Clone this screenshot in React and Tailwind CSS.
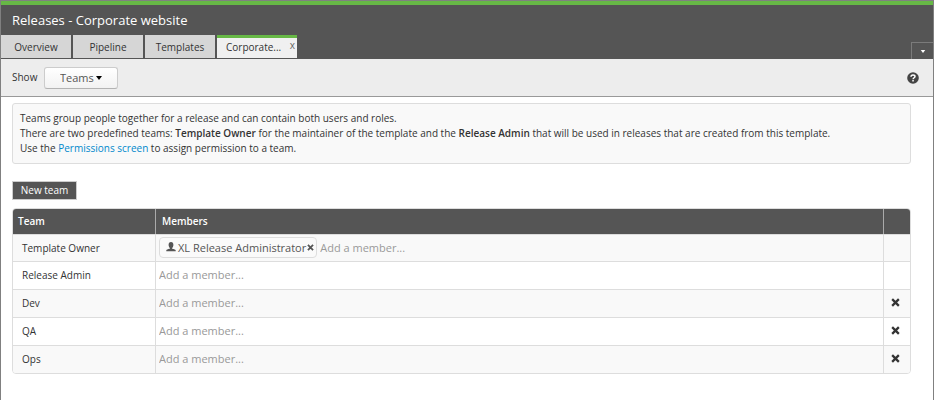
import React from "react";

const teams = [
  { name: "Template Owner", members: ["XL Release Administrator"], removable: false },
  { name: "Release Admin", members: [], removable: false },
  { name: "Dev", members: [], removable: true },
  { name: "QA", members: [], removable: true },
  { name: "Ops", members: [], removable: true },
];

function Cross({ className }) {
  return (
    <svg viewBox="0 0 10 10" className={className} aria-hidden="true">
      <path d="M1.3 1.3 8.7 8.7M8.7 1.3 1.3 8.7" stroke="currentColor" strokeWidth="2.5" fill="none" />
    </svg>
  );
}

function Caret({ className }) {
  return (
    <svg viewBox="0 0 6 4" className={className} aria-hidden="true">
      <path d="M0 0h6L3 4z" fill="currentColor" />
    </svg>
  );
}

function UserIcon() {
  return (
    <svg viewBox="0 0 10 10" className="size-[10px] shrink-0" fill="currentColor" aria-hidden="true">
      <path d="M5 0C3.400 0 2.600 1.200 2.600 2.700c0 1.300.5 2.600 1.300 3.200v.7C3.300 7.300.3 7.300.3 8.600V9.300h9.400v-.7c0-1.300-3-1.300-3.600-2v-.7c.8-.6 1.300-1.900 1.300-3.200C7.400 1.200 6.600 0 5 0z" />
    </svg>
  );
}

function HelpIcon() {
  return (
    <svg viewBox="0 0 12 12" className="size-3" aria-hidden="true">
      <circle cx="6" cy="6" r="5.8" fill="#444" />
      <path d="M4 4.700C4 3.400 4.900 2.900 6 2.900s2 .6 2 1.600c0 1.200-1.900 1.300-1.900 2.700" stroke="#fff" strokeWidth="1.500" fill="none" />
      <path d="M5.300 8h1.500v1.500H5.300z" fill="#fff" />
    </svg>
  );
}

function Tab({ children }) {
  return (
    <button className="h-[23px] w-[70px] bg-[#d6d6d6] pt-[2px] text-center text-[#333]">{children}</button>
  );
}

function Header() {
  return (
    <header className="border-t-4 border-[#67b846] bg-[#555]">
      <h1 className="flex h-[30px] items-center px-[11px] text-[13px] text-white">
        Releases - Corporate website
      </h1>
      <div className="flex h-6 items-end justify-between">
        <nav className="flex gap-[2px] self-start">
          <Tab>Overview</Tab>
          <Tab>Pipeline</Tab>
          <Tab>Templates</Tab>
          <div className="flex h-[23px] w-[80px] items-start justify-between border-t-[3px] border-[#67b846] bg-[#f0f0f0] pl-[9px] pr-[2px] text-[#333]">
            <button className="h-[18px]">Corporate...</button>
            <button className="text-[10px] leading-[14px] text-[#666]" aria-label="Close tab">x</button>
          </div>
        </nav>
        <button
          className="flex h-[17px] w-[22px] items-center justify-center border-l border-t border-[#7b7b7b] text-white"
          aria-label="More tabs"
        >
          <Caret className="h-[3px] w-[6px]" />
        </button>
      </div>
    </header>
  );
}

function Toolbar() {
  return (
    <div className="flex h-[38px] items-center border-b border-[#999] bg-[#ededed] pl-[11px] pr-[14px]">
      <label htmlFor="show" className="w-8 text-[#333]">Show</label>
      <div className="relative">
        <select
          id="show"
          className="h-[22px] w-[74px] appearance-none rounded-[3px] border border-[#ccc] border-b-[#b3b3b3] bg-linear-to-b from-white to-[#f2f2f2] pl-[15px] text-[11px] leading-[18px] text-[#555]"
        >
          <option>Teams</option>
        </select>
        <Caret className="pointer-events-none absolute right-[16px] top-[9px] h-1 w-[6px] text-black" />
      </div>
      <button className="ml-auto" aria-label="Help">
        <HelpIcon />
      </button>
    </div>
  );
}

function Member({ name }) {
  return (
    <span className="flex h-[21px] items-center rounded-[4px] border border-[#ddd] bg-[#fafafa] pl-[6px] pr-[2px] text-[#555]">
      <UserIcon />
      <span className="ml-[2px] mr-px whitespace-nowrap">{name}</span>
      <button aria-label={"Remove " + name}>
        <Cross className="size-[7px]" />
      </button>
    </span>
  );
}

function TeamRow({ team }) {
  return (
    <tr className="h-[28px] first:h-[27px] odd:bg-[#f9f9f9]">
      <td className="border-t border-[#ddd] pl-[9px] text-[#333]">{team.name}</td>
      <td className="border-l border-t border-[#ddd] pb-[2px] pl-[3px]">
        <div className="flex items-center gap-[3px] text-[11px]">
          {team.members.map((m) => (
            <Member key={m} name={m} />
          ))}
          <input
            className="h-[21px] min-w-0 flex-1 bg-transparent text-[#555] outline-none placeholder:text-[#999]"
            placeholder="Add a member..."
            aria-label={"Add a member to " + team.name}
          />
        </div>
      </td>
      <td className="border-l border-t border-[#ddd] pb-[3px] pl-[7px]">
        {team.removable && (
          <button className="flex text-[#333]" aria-label={"Delete " + team.name}>
            <Cross className="size-[9px]" />
          </button>
        )}
      </td>
    </tr>
  );
}

export default function App() {
  return (
    <div className="min-h-screen border-x border-t border-[#808080] bg-white font-['Open_Sans',sans-serif] text-[10px] leading-[15px]">
      <Header />
      <Toolbar />
      <main className="pl-[11px] pr-[22px] pt-[6px]">
        <div className="rounded-[3px] border border-[#ddd] bg-[#f9f9f9] p-[7px] text-[#333]">
          <p>Teams group people together for a release and can contain both users and roles.</p>
          <p>
            There are two predefined teams: <b className="font-semibold">Template Owner</b> for the maintainer of the
            template and the <b className="font-semibold">Release Admin</b> that will be used in releases that are
            created from this template.
          </p>
          <p>
            Use the <a href="#permissions" className="text-[#0088cc]">Permissions screen</a> to assign permission to a team.
          </p>
        </div>
        <button className="mt-[17px] flex h-[19px] w-[65px] items-center justify-center border border-[#ccc] bg-[#555] text-white">
          New team
        </button>
        <div className="mt-2 overflow-hidden rounded-[4px] border border-[#ddd]">
          <table className="w-full table-fixed border-separate border-spacing-0 text-left">
            <colgroup>
              <col className="w-[142px]" />
              <col />
              <col className="w-[27px]" />
            </colgroup>
            <thead>
              <tr className="h-[25px] bg-[#555] text-white">
                <th className="pl-[5px] font-semibold">Team</th>
                <th className="border-l border-[#aaa] pl-[6px] font-semibold">Members</th>
                <th className="border-l border-[#aaa]" aria-label="Actions"></th>
              </tr>
            </thead>
            <tbody>
              {teams.map((t) => (
                <TeamRow key={t.name} team={t} />
              ))}
            </tbody>
          </table>
        </div>
      </main>
    </div>
  );
}
